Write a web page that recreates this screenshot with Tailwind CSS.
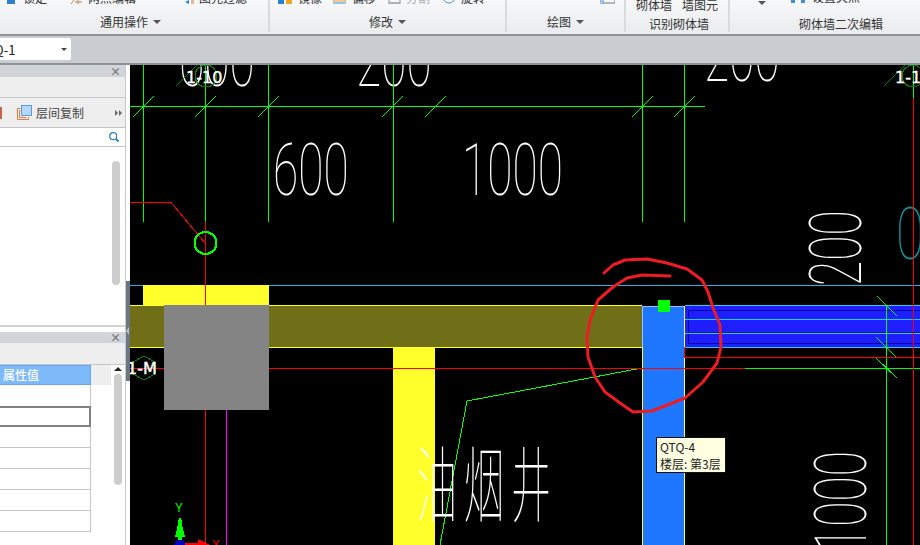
<!DOCTYPE html>
<html lang="zh-CN">
<head>
    <meta charset="UTF-8">
    <title>砌体墙二次编辑</title>
    <script src="https://cdn.jsdelivr.net/npm/@tailwindcss/browser@4"></script>
</head>
<body class="w-[920px] h-[545px] overflow-hidden flex flex-col bg-white text-[12px] text-[#333] font-['Noto_Sans_CJK_SC',sans-serif]">

    <!-- ribbon, cut off at the top of the window -->
    <div class="h-[36px] shrink-0 flex overflow-hidden bg-gradient-to-b from-[#f7f8f9] to-[#e9ebed] border-b-2 border-[#8f9296]">
        <div class="w-[270px] flex flex-col border-r-2 border-[#d8dadc] mb-[2px]">
            <div class="h-[4px] flex items-end leading-[12px]">
                <svg class="ml-[7px] mr-[8px]" width="8" height="4"><rect width="8" height="4" fill="#2f7fd0"/></svg>
                <span class="w-[47px] whitespace-nowrap">锁定</span>
                <svg class="mr-[5px]" width="13" height="4"><path d="M1 4 4 0M8 0v4M5 2h7" stroke="#c9804a" fill="none"/></svg>
                <span class="w-[97px] whitespace-nowrap">两点编辑</span>
                <svg class="mr-[5px]" width="9" height="4"><path d="M0 2 4 0V4Z" fill="#2f7fd0"/><path d="M6 1h3M6 3h3" stroke="#d9772f"/></svg>
                <span class="whitespace-nowrap">图元过滤</span>
            </div>
            <div class="mt-auto mb-[2px] pl-[100px] flex items-center gap-[5px] leading-[16px]">
                <span>通用操作</span>
                <span class="w-0 h-0 border-x-[4px] border-x-transparent border-t-[4px] border-t-[#555]"></span>
            </div>
        </div>
        <div class="w-[237px] flex flex-col border-r-2 border-[#d8dadc] mb-[2px]">
            <div class="h-[4px] flex items-end leading-[12px]">
                <svg class="ml-[8px] mr-[6px]" width="14" height="5"><rect width="6" height="5" fill="#2f7fd0"/><rect x="8" width="6" height="5" fill="#f2a71b"/></svg>
                <span class="w-[35px] whitespace-nowrap">镜像</span>
                <svg class="mr-[6px]" width="13" height="5"><rect x="0.5" y="-4" width="12" height="6" fill="none" stroke="#e3a23a"/><path d="M0 4h13" stroke="#3f8fd8"/></svg>
                <span class="w-[36px] whitespace-nowrap">偏移</span>
                <svg class="mr-[5px]" width="13" height="5"><path d="M1 0v4h11V0M0 4h13" stroke="#999" fill="none"/></svg>
                <span class="w-[36px] whitespace-nowrap text-[#aaa]">分割</span>
                <svg class="mr-[5px]" width="14" height="6"><circle cx="7" cy="-1" r="6" stroke="#3f8fd8" fill="none"/></svg>
                <span class="whitespace-nowrap">旋转</span>
            </div>
            <div class="mt-auto mb-[2px] pl-[99px] flex items-center gap-[5px] leading-[16px]">
                <span>修改</span>
                <span class="w-0 h-0 border-x-[4px] border-x-transparent border-t-[4px] border-t-[#555]"></span>
            </div>
        </div>
        <div class="w-[119px] flex flex-col border-r-2 border-[#d8dadc] mb-[2px]">
            <div class="h-[4px] flex items-end pl-[93px]">
                <svg width="15" height="4"><path d="M0 3h15M15 0v3" stroke="#777" fill="none"/><rect x="0" y="1" width="3" height="3" fill="#fff" stroke="#3f8fd8"/></svg>
            </div>
            <div class="mt-auto mb-[2px] pl-[40px] flex items-center gap-[5px] leading-[16px]">
                <span>绘图</span>
                <span class="w-0 h-0 border-x-[4px] border-x-transparent border-t-[4px] border-t-[#555]"></span>
            </div>
        </div>
        <div class="w-[104px] flex flex-col border-r-2 border-[#d8dadc] mb-[2px]">
            <div class="h-[11px] flex items-end gap-[10px] pl-[10px] leading-[12px] whitespace-nowrap">
                <span>砌体墙</span>
                <span>墙图元</span>
            </div>
            <div class="mt-auto pl-[23px] leading-[16px]">识别砌体墙</div>
        </div>
        <div class="flex-1 flex flex-col mb-[2px]">
            <div class="h-[3px] flex items-end leading-[12px] whitespace-nowrap">
                <span class="ml-[28px] mb-[-2px] w-0 h-0 border-x-[4px] border-x-transparent border-t-[4px] border-t-[#555]"></span>
                <svg class="ml-[25px] mr-[7px]" width="14" height="4"><rect width="4" height="4" fill="#3f8fd8"/><rect x="5" width="4" height="4" fill="#fff"/><rect x="10" width="4" height="4" fill="#3f8fd8"/></svg>
                <span>设置夹点</span>
            </div>
            <div class="mt-auto pl-[69px] leading-[16px]">砌体墙二次编辑</div>
        </div>
    </div>

    <!-- combobox strip -->
    <div class="h-[29px] shrink-0 flex items-center bg-[#c9ccd1] border-b-2 border-[#8f9296] pb-[1px]">
        <div class="w-[72px] h-[22px] -ml-[1px] flex items-center justify-between bg-white rounded-r-[2px] pr-[4px] text-[13px] text-[#222] leading-none overflow-hidden">
            <span class="-ml-[5px]">Q-1</span>
            <span class="w-0 h-0 border-x-[3px] border-x-transparent border-t-[3px] border-t-[#444]"></span>
        </div>
    </div>

    <div class="flex-1 flex min-h-0">
        <!-- left panels -->
        <div class="w-[126px] shrink-0 flex flex-col border-r border-[#c6c8cc] bg-white">
            <div class="h-[12px] shrink-0 flex items-center justify-end pr-[4px] bg-[#d1d4d8] text-[#777] text-[11px] font-bold leading-none">×</div>
            <div class="h-[21px] shrink-0 bg-[#eeeeee] border-b border-[#c9c9cd]"></div>
            <div class="h-[30px] shrink-0 flex items-center bg-[#eeeeee] border-b border-[#c4c4c9]">
                <span class="w-[2px] h-[12px] bg-[#c9604a]"></span>
                <svg class="ml-[15px] mr-[4px]" width="15" height="15" viewBox="0 0 15 15"><path d="M3.5 3.5H.5v11h11V12" fill="none" stroke="#e07b39"/><path d="M3.5 5.5H2.500v7h7" fill="none" stroke="#e07b39"/><rect x="4.500" y="0.500" width="10" height="10" fill="#b5d6fb" stroke="#5b9bdf"/></svg>
                <span class="text-[#444] whitespace-nowrap">层间复制</span>
                <span class="ml-auto mr-[3px] flex">
                    <span class="w-0 h-0 border-y-[3px] border-y-transparent border-l-[3px] border-l-[#666]"></span>
                    <span class="w-0 h-0 ml-[1px] border-y-[3px] border-y-transparent border-l-[3px] border-l-[#666]"></span>
                </span>
            </div>
            <div class="h-[19px] shrink-0 flex items-center justify-end pr-[6px] border-b border-[#c4c4c9]">
                <svg width="10" height="10" viewBox="0 0 10 10" fill="none" stroke="#2f86b8"><circle cx="4.200" cy="4.200" r="3.500" stroke-width="1.200"/><path d="M6.800 6.800 9.500 9.500" stroke-width="2"/></svg>
            </div>
            <div class="h-[180px] shrink-0 flex justify-end pt-[14px] pr-[5px] border-b-2 border-[#d2d2d6]">
                <div class="w-[8px] h-[124px] rounded-[4px] bg-[#cdcdcd]"></div>
            </div>
            <div class="h-[5px] shrink-0 bg-white"></div>
            <div class="h-[11px] shrink-0 flex items-center justify-end pr-[4px] bg-[#d1d4d8] text-[#777] text-[11px] font-bold leading-none">×</div>
            <div class="h-[22px] shrink-0 bg-[#eeeeee] border-b border-[#c4c4c9]"></div>
            <div class="flex-1 flex min-h-0 overflow-hidden">
                <div class="w-[91px] shrink-0 flex flex-col">
                    <div class="h-[20px] shrink-0 pl-[3px] flex items-center bg-[#7eb9f9] border border-l-0 border-[#64a8f2] text-white font-medium">属性值</div>
                    <div class="h-[21px] shrink-0 border-r border-[#c4c4c9]"></div>
                    <div class="h-[21px] shrink-0 border-2 border-l-0 border-[#808080]"></div>
                    <div class="h-[21px] shrink-0 border-r border-b border-[#c4c4c9]"></div>
                    <div class="h-[21px] shrink-0 border-r border-b border-[#c4c4c9]"></div>
                    <div class="h-[21px] shrink-0 border-r border-b border-[#c4c4c9]"></div>
                    <div class="h-[21px] shrink-0 border-r border-b border-[#c4c4c9]"></div>
                    <div class="h-[21px] shrink-0 border-r border-b border-[#c4c4c9]"></div>
                </div>
                <div class="w-[20px] shrink-0 h-[20px] bg-[#eeeeee]"></div>
                <div class="flex-1 flex flex-col items-center pr-[1px] pt-[2px]">
                    <span class="w-0 h-0 border-x-[4px] border-x-transparent border-b-[4px] border-b-[#222]"></span>
                    <div class="mt-[3px] w-[8px] h-[111px] rounded-[4px] bg-[#cdcdcd]"></div>
                </div>
            </div>
        </div>

        <!-- splitter -->
        <div class="w-[4px] shrink-0 flex flex-col bg-white">
            <div class="mt-[216px] h-[100px] flex items-center bg-[#6d7680]">
                <span class="w-0 h-0 border-y-[4px] border-y-transparent border-r-[3px] border-r-[#b9bec4]"></span>
            </div>
        </div>

        <!-- drawing canvas -->
        <div class="relative flex-1 bg-black overflow-hidden">
            <svg class="block" width="790" height="480" viewBox="130 65 790 480">
                <!-- dimension text -->
                <g fill="#fff" font-family="Roboto, sans-serif" font-weight="100" font-size="72">
                    <text transform="translate(179 85.500) scale(.64 1)">600</text>
                    <text transform="translate(356 85.500) scale(.64 1)">200</text>
                    <text transform="translate(704 81) scale(.64 1)">200</text>
                    <text transform="translate(273 195) scale(.64 1)">600</text>
                    <text transform="translate(462 195) scale(.64 1)">1000</text>
                    <text transform="translate(861 286) rotate(-90) scale(.64 1)">200</text>
                    <text transform="translate(866 552) rotate(-90) scale(.64 1)">1000</text>
                    <text fill="#12909a" transform="translate(896 259) scale(.72 1)">0</text>
                </g>

                <g shape-rendering="crispEdges">
                    <!-- cyan and structural blocks -->
                    <path d="M130 285.500H920" stroke="#1eb4e6"/>
                    <rect x="143" y="285" width="126" height="20" fill="#ffff2b"/>
                    <rect x="130" y="305" width="512" height="43" fill="#6f6f18"/>
                    <path d="M130 305.500H642M130 347.500H642" stroke="#ffff2b"/>
                    <rect x="393" y="348" width="42" height="197" fill="#ffff2b"/>
                    <rect x="685" y="305" width="235" height="43" fill="#1e1eff"/>
                    <path d="M920 310.500H688.500V343.500H920M688 332.500H920" fill="none" stroke="#0a0a96" stroke-width="1.500"/>
                    <path d="M685 305.500H920M685 319.500H920M685 333.500H920M685 347.500H920" stroke="#25d0e8"/>
                    <rect x="642" y="306" width="43" height="239" fill="#1f77ff"/>
                    <path d="M642.500 306H684.500" stroke="#9cc3f5"/>
                    <path d="M642.500 306V347" stroke="#9cc3f5"/>
                    <path d="M642.500 347V545M684.500 306V545" stroke="#ffff2b"/>

                    <!-- green axis grid -->
                    <g stroke="#00ff00" fill="none">
                        <path d="M130 106.500H705M143.500 65V222M205.500 65V222M268.500 65V222M393.500 65V222M642.500 65V222M684.500 65V222"/>
                        <path d="M133 117 154 96M195 117 216 96M258 117 279 96M382 117 403 96M425 117 446 96M632 117 653 96M674 117 695 96"/>
                        <path d="M886.500 305V545"/>
                        <path d="M877 296 897 316M876 337 897 358M876 358 897 378"/>
                        <path d="M642 368 467 401 440 545"/>
                        <path d="M745 368.500H920M913.500 65V98"/>
                    </g>
                    <!-- red lines -->
                    <g stroke="#ff0000" fill="none">
                        <path d="M205.500 222V305M205.500 410V545"/>
                        <path d="M130 202.500H171L205 243"/>
                        <path d="M130 368.500H745"/>
                        <path d="M684.500 347V357.500H920"/>
                        <path d="M913.500 98V545"/>
                    </g>
                    <path d="M226.500 410V545" stroke="#ff00ff"/>
                    <rect x="164" y="305" width="105" height="105" fill="#848484"/>
                    <circle cx="205.500" cy="243" r="11" fill="none" stroke="#00ff00" stroke-width="2"/>
                    <rect x="658" y="300" width="12" height="12" fill="#00ff00"/>

                    <!-- axis markers -->
                    <g fill="none" stroke="#0a800a">
                        <circle cx="206" cy="76" r="11"/>
                        <circle cx="913" cy="76" r="11"/>
                        <path d="M176 86 197 65M884 86 905 65"/>
                        <path d="M144 356 155 362V374L144 380 133 374V362Z"/>
                    </g>
                    <!-- xyz gizmo -->
                    <path d="M180 520V540" stroke="#00ff00" stroke-width="4"/>
                    <path d="M180 516 185 537H175Z" fill="#00ff00"/>
                    <circle cx="180" cy="546" r="6" fill="#0000c8"/>
                    <path d="M185 544H200" stroke="#ff0000" stroke-width="3"/>
                    <path d="M198 539 210 545H198Z" fill="#ff0000"/>
                </g>

                <g font-family="'Liberation Sans', sans-serif" font-size="12">
                    <text x="175" y="512" fill="#00ff00">Y</text>
                    <text x="212" y="549" fill="#ff0000">X</text>
                </g>
                <g fill="#fff" stroke="#fff" stroke-width=".4" font-family="'DejaVu Sans', sans-serif" font-size="16">
                    <text x="186" y="83">1-10</text>
                    <text x="895" y="83">1-1</text>
                    <text x="127" y="374">1-M</text>
                </g>

                <!-- well label -->
                <text fill="#fff" font-family="'Noto Sans CJK SC', sans-serif" font-weight="100" font-size="40" transform="translate(417 515) scale(1 2.050)" letter-spacing="7">油烟井</text>

                <!-- red marker circle drawn over the picture -->
                <path d="M604 273 613 265 625 260 647 259 667 263 687 269 702 280 708 292 713 308 720 325 721 347 717 363 703 382 685 398 670 404 652 411 633 412 620 403 605 392 595 377 588 357 587 337 590 320 598 300 613 287 627 278 642 275 670 276" fill="none" stroke="#ed1c24" stroke-width="3" stroke-linejoin="round" stroke-linecap="round"/>
            </svg>

            <!-- tooltip -->
            <div class="absolute left-[526px] top-[372px] w-[70px] h-[36px] pl-[3px] bg-[#ffffe1] border border-[#111] text-[12px] leading-[17px] text-[#222] whitespace-nowrap">
                <div>QTQ-4</div>
                <div>楼层: 第3层</div>
            </div>
        </div>
    </div>

</body>
</html>
